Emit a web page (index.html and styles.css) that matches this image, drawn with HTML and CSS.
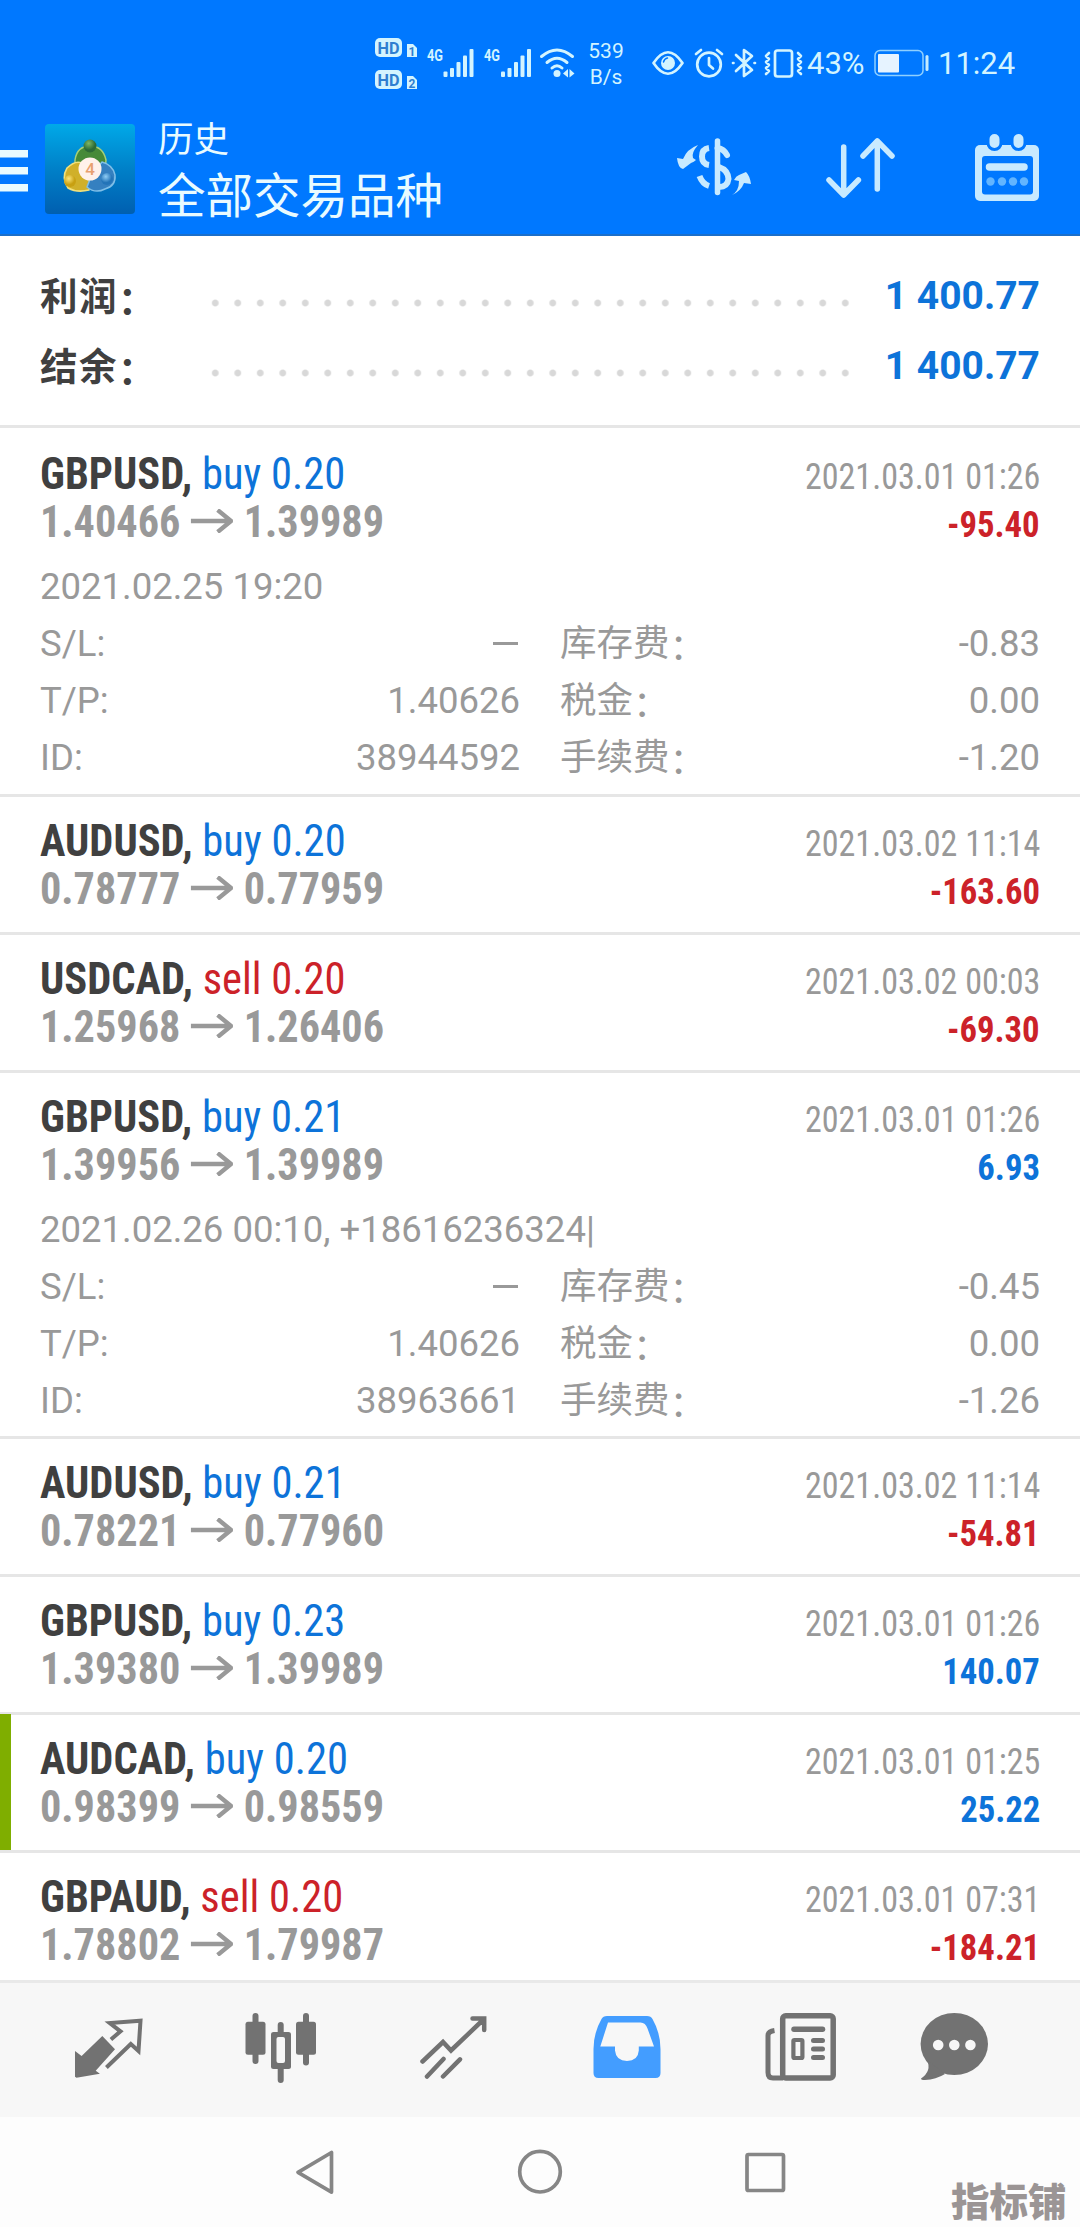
FILE: index.html
```html
<!DOCTYPE html>
<html lang="zh-CN">
<head>
<meta charset="utf-8">
<title>历史</title>
<link rel="stylesheet" href="styles.css">
</head>
<body>
<div class="screen">
  <div class="status">
    <svg class="status-signals" viewBox="372 30 206 66" width="206" height="66">
      <g fill="#d3f4ff">
        <rect x="375" y="38" width="27" height="19" rx="5"/><path d="M407 44h6l4 4v9h-10z"/>
        <rect x="375" y="70" width="27" height="19" rx="5"/><path d="M407 76h6l4 4v9h-10z"/>
        <rect x="443.500" y="71.500" width="4" height="5.500" rx="1"/><rect x="450" y="68" width="4" height="9" rx="1"/><rect x="456.500" y="62" width="4" height="15" rx="1"/><rect x="463" y="55.500" width="4" height="21.500" rx="1"/><rect x="469.500" y="49" width="4" height="28" rx="1"/>
        <rect x="501" y="71.500" width="4" height="5.500" rx="1"/><rect x="507.500" y="68" width="4" height="9" rx="1"/><rect x="514" y="62" width="4" height="15" rx="1"/><rect x="520.500" y="55.500" width="4" height="21.500" rx="1"/><rect x="527" y="49" width="4" height="28" rx="1"/>
        <circle cx="557" cy="73.500" r="3.500"/><path d="M568 69l-5 4.500 5 4zM569.500 69l5 4.500-5 4z"/>
      </g>
      <g fill="none" stroke="#d3f4ff" stroke-width="3" stroke-linecap="round"><path d="M541.500 56.500q15.500-13 31 0M547 62.500q10-8.500 20 0M552 68q5-4.500 10 0"/></g>
      <g class="badge-text"><text x="377.500" y="53.500" textLength="22" lengthAdjust="spacingAndGlyphs">HD</text><text x="377.500" y="85.500" textLength="22" lengthAdjust="spacingAndGlyphs">HD</text><text class="tiny" x="408.500" y="55.500">1</text><text class="tiny" x="408.500" y="87.500">2</text></g>
      <g class="net-text"><text x="427" y="61" textLength="16" lengthAdjust="spacingAndGlyphs">4G</text><text x="484" y="61" textLength="16" lengthAdjust="spacingAndGlyphs">4G</text></g>
    </svg>
    <div class="speed"><span>539</span><span>B/s</span></div>
    <svg class="status-icons" viewBox="650 43 154 40" width="154" height="40" fill="none" stroke="#d3f4ff" stroke-width="2.700" stroke-linecap="round" stroke-linejoin="round">
      <path d="M653.500 63q14.500-21.500 29 0-14.500 21.500-29 0z"/><circle cx="668" cy="63" r="7" fill="#d3f4ff" stroke="none"/><path d="M663.500 62q1-3.500 4-4" stroke="#0078ff" stroke-width="1.500"/>
      <circle cx="709" cy="64.500" r="11.800"/><path d="M709 58v7l4 3.500M696 54l5-4M722 54l-5-4"/>
      <path d="M736 55l16 15-8 6V50l8 6-16 15M733 63h.5M754.500 63h.5"/>
      <rect x="775" y="50.500" width="17" height="26" rx="2.500"/><path d="M769 53l-3 3 3 3-3 3 3 3-3 3 3 3-3 3M798 53l3 3-3 3 3 3-3 3 3 3-3 3 3 3" stroke-width="2.600"/>
    </svg>
    <span class="percent">43%</span>
    <svg class="battery" viewBox="873 48 58 30" width="58" height="30"><rect x="875" y="50.500" width="48" height="25" rx="5" fill="none" stroke="#8fd0ff" stroke-width="1.500"/><rect x="878" y="54" width="21" height="18.500" rx="1" fill="#e6f3ff"/><rect x="925.500" y="55" width="3" height="16" rx="1.500" fill="#c5ebff"/></svg>
    <span class="clock">11:24</span>
  </div>

  <header class="header">
    <svg class="menu" viewBox="0 0 28 42" width="28" height="42" fill="#e9fbff"><path d="M0 0h28v7.500H0zM0 17h28v7.500H0zM0 34h28v7.500H0z"/></svg>
    <svg class="logo" viewBox="0 0 90 90" width="90" height="90">
      <defs>
        <linearGradient id="sea" x1="0" y1="0" x2="0" y2="1"><stop offset="0" stop-color="#00a9e8"/><stop offset=".5" stop-color="#0080c8"/><stop offset="1" stop-color="#005fb0"/></linearGradient>
        <radialGradient id="gGreen" cx=".4" cy=".3"><stop offset="0" stop-color="#7fb765"/><stop offset="1" stop-color="#2d6a35"/></radialGradient>
        <radialGradient id="gGold" cx=".4" cy=".3"><stop offset="0" stop-color="#fbe57a"/><stop offset="1" stop-color="#c8a012"/></radialGradient>
        <radialGradient id="gBlue" cx=".4" cy=".3"><stop offset="0" stop-color="#8fcdf5"/><stop offset="1" stop-color="#2374b8"/></radialGradient>
      </defs>
      <rect width="90" height="90" rx="4" fill="url(#sea)"/>
      <path d="M30 46V36q2-14 15-14t16 14l-1 12z" fill="#468a38" stroke="#a5cf78" stroke-width="1.500"/>
      <path d="M44 66q-12 3-21-2-7-10-1-20 8-8 15-5l8 10z" fill="#d0b02a" stroke="#f0e07c" stroke-width="1.500"/>
      <path d="M42 63q8 7 18 2 11-3 10-14-2-10-13-13l-10 12z" fill="#3580c0" stroke="#7fbfe8" stroke-width="1.500"/>
      <circle cx="45" cy="22" r="6.500" fill="url(#gGreen)"/><circle cx="25" cy="57" r="6" fill="url(#gGold)"/><circle cx="62" cy="55" r="6" fill="url(#gBlue)"/>
      <circle cx="45" cy="45" r="11.500" fill="#fff1ea"/><text class="logo-text" x="45" y="51" text-anchor="middle">4</text>
    </svg>
    <div class="titles"><div class="title">历史</div><div class="subtitle">全部交易品种</div></div>
    <svg class="action" viewBox="674 129 80 80" width="80" height="80">
      <g fill="none" stroke="#c8eaff" stroke-width="6" stroke-linecap="round"><path d="M717.500 141v51.500" stroke-width="5.500"/><path d="M727 155q-3-6-9.500-7M719 167q9 3 9.500 12-1 8-9.500 8"/><path stroke-linecap="butt" d="M709 148q-7 1-7 8.500t7 8.500M699.500 176q3 8 9.500 10"/></g>
      <g fill="#c8eaff"><path d="M698 145q-7 8-5 13l3 2q-2 2-5 3l-8 6q-5-1-6-11l6 1q4-10 15-14z"/><path d="M732 195q7-4 7-14l-5-1q2-4 5-5l7-3q4 4 5 12l-7-1q-3 8-12 12z"/></g>
    </svg>
    <svg class="action sort" viewBox="820 129 80 80" width="80" height="80" fill="none" stroke="#c8eaff" stroke-width="5.500" stroke-linecap="round" stroke-linejoin="round"><path d="M843.700 147v48M829 180l14.700 15 14.700-15M877.300 189v-48M863 156l14.300-15 14.700 15"/></svg>
    <svg class="action calendar" viewBox="967 129 80 80" width="80" height="80"><rect x="975" y="145" width="64" height="56" rx="5" fill="#c8eaff"/><rect x="982" y="156" width="51" height="38.500" rx="3" fill="#0078ff"/><g fill="#c8eaff" stroke="#0078ff" stroke-width="3"><rect x="988" y="132.500" width="13" height="17" rx="6.500"/><rect x="1012" y="132.500" width="13" height="17" rx="6.500"/></g><path d="M989.500 167h34.500" stroke="#c8eaff" stroke-width="7.500" stroke-linecap="round"/><g fill="#62b5ff"><circle cx="990.500" cy="181.500" r="4.200"/><circle cx="1002" cy="181.500" r="4.200"/><circle cx="1013" cy="181.500" r="4.200"/><circle cx="1024" cy="181.500" r="4.200"/></g></svg>
  </header>

  <section class="summary">
    <div class="sum-row"><span class="sum-label">利润<span class="colon">：</span></span><span class="dots"></span><span class="sum-value">1 400.77</span></div>
    <div class="sum-row"><span class="sum-label">结余<span class="colon">：</span></span><span class="dots"></span><span class="sum-value">1 400.77</span></div>
  </section>

  <main class="deals">
    <article class="deal open first">
      <div class="line"><div class="name">GBPUSD, <span class="buy">buy 0.20</span></div><div class="time">2021.03.01 01:26</div></div>
      <div class="line"><div class="price">1.40466<svg class="arrow" viewBox="0 0 44 24"><path d="M0 12h42M28 1l14 11-14 11"/></svg>1.39989</div><div class="profit loss">-95.40</div></div>
      <div class="details"><div class="note">2021.02.25 19:20</div>
        <div class="cell"><span>S/L:</span><span class="dash"></span></div><div class="cell"><span>库存费<span class="colon">：</span></span><span>-0.83</span></div>
        <div class="cell"><span>T/P:</span><span>1.40626</span></div><div class="cell"><span>税金<span class="colon">：</span></span><span>0.00</span></div>
        <div class="cell"><span>ID:</span><span>38944592</span></div><div class="cell"><span>手续费<span class="colon">：</span></span><span>-1.20</span></div></div>
    </article>
    <article class="deal">
      <div class="line"><div class="name">AUDUSD, <span class="buy">buy 0.20</span></div><div class="time">2021.03.02 11:14</div></div>
      <div class="line"><div class="price">0.78777<svg class="arrow" viewBox="0 0 44 24"><path d="M0 12h42M28 1l14 11-14 11"/></svg>0.77959</div><div class="profit loss">-163.60</div></div>
    </article>
    <article class="deal">
      <div class="line"><div class="name">USDCAD, <span class="sell">sell 0.20</span></div><div class="time">2021.03.02 00:03</div></div>
      <div class="line"><div class="price">1.25968<svg class="arrow" viewBox="0 0 44 24"><path d="M0 12h42M28 1l14 11-14 11"/></svg>1.26406</div><div class="profit loss">-69.30</div></div>
    </article>
    <article class="deal open">
      <div class="line"><div class="name">GBPUSD, <span class="buy">buy 0.21</span></div><div class="time">2021.03.01 01:26</div></div>
      <div class="line"><div class="price">1.39956<svg class="arrow" viewBox="0 0 44 24"><path d="M0 12h42M28 1l14 11-14 11"/></svg>1.39989</div><div class="profit gain">6.93</div></div>
      <div class="details"><div class="note">2021.02.26 00:10, +18616236324|</div>
        <div class="cell"><span>S/L:</span><span class="dash"></span></div><div class="cell"><span>库存费<span class="colon">：</span></span><span>-0.45</span></div>
        <div class="cell"><span>T/P:</span><span>1.40626</span></div><div class="cell"><span>税金<span class="colon">：</span></span><span>0.00</span></div>
        <div class="cell"><span>ID:</span><span>38963661</span></div><div class="cell"><span>手续费<span class="colon">：</span></span><span>-1.26</span></div></div>
    </article>
    <article class="deal">
      <div class="line"><div class="name">AUDUSD, <span class="buy">buy 0.21</span></div><div class="time">2021.03.02 11:14</div></div>
      <div class="line"><div class="price">0.78221<svg class="arrow" viewBox="0 0 44 24"><path d="M0 12h42M28 1l14 11-14 11"/></svg>0.77960</div><div class="profit loss">-54.81</div></div>
    </article>
    <article class="deal">
      <div class="line"><div class="name">GBPUSD, <span class="buy">buy 0.23</span></div><div class="time">2021.03.01 01:26</div></div>
      <div class="line"><div class="price">1.39380<svg class="arrow" viewBox="0 0 44 24"><path d="M0 12h42M28 1l14 11-14 11"/></svg>1.39989</div><div class="profit gain">140.07</div></div>
    </article>
    <article class="deal marked">
      <div class="line"><div class="name">AUDCAD, <span class="buy">buy 0.20</span></div><div class="time">2021.03.01 01:25</div></div>
      <div class="line"><div class="price">0.98399<svg class="arrow" viewBox="0 0 44 24"><path d="M0 12h42M28 1l14 11-14 11"/></svg>0.98559</div><div class="profit gain">25.22</div></div>
    </article>
    <article class="deal">
      <div class="line"><div class="name">GBPAUD, <span class="sell">sell 0.20</span></div><div class="time">2021.03.01 07:31</div></div>
      <div class="line"><div class="price">1.78802<svg class="arrow" viewBox="0 0 44 24"><path d="M0 12h42M28 1l14 11-14 11"/></svg>1.79987</div><div class="profit loss">-184.21</div></div>
    </article>
  </main>

  <nav class="tabs">
    <svg viewBox="68 2010 80 80"><path d="M102.300 2036l12.700 13.300-19.300 21.400 4.200 3-23.400 4-1.500-1V2051l6.600 5z" fill="#727272"/><path d="M110.900 2039.500l9.600-8.200-10.700-8.300 30.700-2.300-2 30.300-7.700-7-24.400 23.500" fill="none" stroke="#727272" stroke-width="4"/></svg>
    <svg viewBox="241 2010 80 80" fill="#727272"><rect x="252.500" y="2013" width="6" height="51" rx="3"/><rect x="245.500" y="2021.700" width="20" height="33" rx="2.500"/><rect x="277.700" y="2022" width="6" height="61" rx="3"/><rect x="271" y="2032" width="20" height="37" rx="2.500"/><rect x="276.500" y="2037" width="8.500" height="26" rx="2" fill="#f7f7f7"/><rect x="303" y="2013" width="6" height="52.500" rx="3"/><rect x="296" y="2021.700" width="20" height="33" rx="2.500"/></svg>
    <svg viewBox="414 2010 80 80" fill="none" stroke="#727272" stroke-width="4.500" stroke-linecap="round"><path d="M422.500 2061.500l20.500-19.500 8 8.500 33-31.500M472.500 2018.500h11.700v11.500M443.500 2059l-16.500 17.500M460 2059.300l-17 17.200"/></svg>
    <svg viewBox="587 2010 80 80"><path fill="#439dff" fill-rule="evenodd" d="M607 2016h40q4 0 5.500 3 8 14 8 30v24q0 5-5 5h-57q-5 0-5-5v-24q0-16 8-30 1.500-3 5.500-3zM608 2022.500L600.300 2046.500H615v4q1 10.500 12 10.500t11.800-10.500v-4h15.200l-6.500-18q-2-6-7-6z"/></svg>
    <svg viewBox="760 2010 80 80" fill="none" stroke="#727272" stroke-width="5.500"><rect x="782.700" y="2015.700" width="50.500" height="62.300" rx="3"/><path d="M774.500 2030.500q-6.500 1-6.500 5v37q0 5.500 5 5.500h10" stroke-width="5"/><path d="M794 2029.300h28.500" stroke-linecap="round"/><rect x="793.400" y="2040" width="9" height="18" rx="1" stroke-width="4.200"/><path d="M813.500 2040.500h9M813.500 2049h9M813.500 2057.500h9" stroke-width="5" stroke-linecap="round"/></svg>
    <svg class="chat" viewBox="915 2010 80 80"><ellipse cx="954.300" cy="2044" rx="33.700" ry="31" fill="#727272"/><path d="M927 2060q5 11-6 18.500 0 1.500 4 1.500 11-.500 20-6z" fill="#727272"/><g fill="#f7f7f7"><circle cx="938.200" cy="2045" r="5.300"/><circle cx="954.300" cy="2045" r="5.300"/><circle cx="970.400" cy="2045" r="5.300"/></g></svg>
  </nav>

  <footer class="sysnav">
    <svg viewBox="285 2142 60 60"><path d="M298 2172.300l33.500-19.800v39.600z"/></svg>
    <svg viewBox="510 2142 60 60"><circle cx="540" cy="2171.700" r="20.300"/></svg>
    <svg viewBox="735 2142 60 60"><rect x="747" y="2154.500" width="36.500" height="36" rx="1.500"/></svg>
  </footer>
  <div class="watermark">指标铺</div>
</div>
</body>
</html>
```
FILE: styles.css
```css
* { box-sizing: border-box; }
body { margin: 0; font-family: Roboto, "Noto Sans CJK SC", sans-serif; background: #fdfdfd; }
svg { display: block; flex: none; }
.screen { position: relative; width: 1080px; height: 2227px; overflow: hidden; display: flex; flex-direction: column; background: #fdfdfd; }

.status { height: 100px; flex: none; display: flex; align-items: flex-start; padding-left: 372px; background: #0078ff; color: #d3f4ff; white-space: nowrap; }
.status-signals { margin-top: 30px; }
.badge-text { fill: #2f7fd0; font: 700 16px Roboto, sans-serif; }
.badge-text .tiny { font-size: 12px; }
.net-text { fill: #d3f4ff; font: 700 17px Roboto, sans-serif; }
.speed { width: 60px; margin: 38px 0 0 -2px; display: flex; flex-direction: column; align-items: center; font-size: 21px; line-height: 26px; }
.status-icons { margin: 43px 0 0 14px; }
.percent { width: 66px; padding-left: 3px; margin-top: 44px; font-size: 31px; line-height: 40px; }
.battery { margin: 48px 0 0 3px; }
.clock { margin: 44px 0 0 7px; font-size: 31px; line-height: 40px; }

.header { height: 136px; flex: none; display: flex; align-items: flex-start; background: #0078ff; color: #e9fbff; border-bottom: 2px solid #1c6fca; }
.menu { margin-top: 50px; }
.logo { margin: 24px 0 0 17px; }
.logo-text { font: 500 17px Roboto, sans-serif; fill: #e8a070; }
.titles { width: 516px; margin: 12px 0 0 23px; font-family: "Noto Sans CJK SC", sans-serif; white-space: nowrap; }
.title { font-size: 35.500px; line-height: 50px; }
.subtitle { font-size: 47.500px; line-height: 62px; }
.action { margin-top: 29px; }
.sort { margin-left: 66px; }
.calendar { margin-left: 67px; }

.summary { height: 189px; flex: none; padding: 25px 40px 0; background: #fff; }
.sum-row { height: 70px; display: flex; align-items: center; font-weight: 700; }
.sum-label { width: 164px; margin-top: -5px; font: 700 37.500px/70px "Noto Sans CJK SC", sans-serif; letter-spacing: 1.500px; color: #404040; white-space: nowrap; }
.colon { position: relative; top: 4px; }
.dots { width: 653px; height: 8px; margin-top: 14px; background: radial-gradient(circle, #d8d8d8 2.800px, transparent 4px) 0 0 / 22.500px 8px repeat-x; }
.sum-value { margin-left: auto; font-size: 39px; line-height: 70px; color: #0d73d9; white-space: nowrap; }

.deals { height: 1555px; flex: none; overflow: hidden; background: #fff; }
.deal { position: relative; height: 138px; padding: 19.500px 40px 0; border-top: 3px solid #e6e6e6; }
.deal.open { height: 366px; }
.deal.first { height: 369px; padding-top: 22px; }
.deal.marked::before { content: ""; position: absolute; left: 0; top: -1px; width: 11px; height: 137px; background: #7fae00; }
.line { height: 48px; display: flex; justify-content: space-between; align-items: baseline; line-height: 48px; white-space: nowrap; }
.name, .price, .time, .profit { font-family: "Roboto Condensed", Roboto, sans-serif; font-stretch: 75%; }
.name, .price { transform-origin: left center; }
.time, .profit { transform-origin: right center; }
.name { font-size: 44px; font-weight: 700; color: #404040; transform: scaleX(.967); }
.name span { font-weight: 400; }
.price { font-size: 44px; font-weight: 700; color: #999; transform: scaleX(.96); }
.arrow { display: inline-block; width: 44px; height: 24px; margin: 0 11px; vertical-align: 4px; fill: none; stroke: #999; stroke-width: 4.500px; }
.time { font-size: 36.500px; color: #999; transform: scaleX(.933); }
.profit { font-size: 36.500px; font-weight: 700; transform: scaleX(.95); }
.buy, .gain { color: #0d73d9; }
.sell, .loss { color: #cc2229; }
.details { margin-top: 12px; display: grid; grid-template-columns: 480px 480px; column-gap: 40px; font-size: 36.500px; line-height: 57px; color: #999; white-space: nowrap; }
.note { grid-column: 1 / 3; height: 57px; }
.cell { height: 57px; display: flex; justify-content: space-between; align-items: baseline; }
.dash { width: 25px; height: 3px; background: #999; margin-right: 2px; align-self: center; }

.tabs { height: 137px; flex: none; display: flex; gap: 93px; padding: 27px 0 0 68px; background: #f7f7f7; border-top: 3px solid #e9e9e9; }
.tabs svg { width: 80px; height: 80px; }
.tabs .chat { margin-left: -18px; }
.sysnav { height: 110px; display: flex; justify-content: center; gap: 165px; padding-top: 25px; }
.sysnav svg { width: 60px; height: 60px; fill: none; stroke: #868686; stroke-width: 3.700px; stroke-linejoin: round; }
.watermark { position: absolute; left: 951px; top: 2174px; font: 900 38.500px/50px "Noto Sans CJK SC", sans-serif; color: #9b9595; white-space: nowrap; }
```
